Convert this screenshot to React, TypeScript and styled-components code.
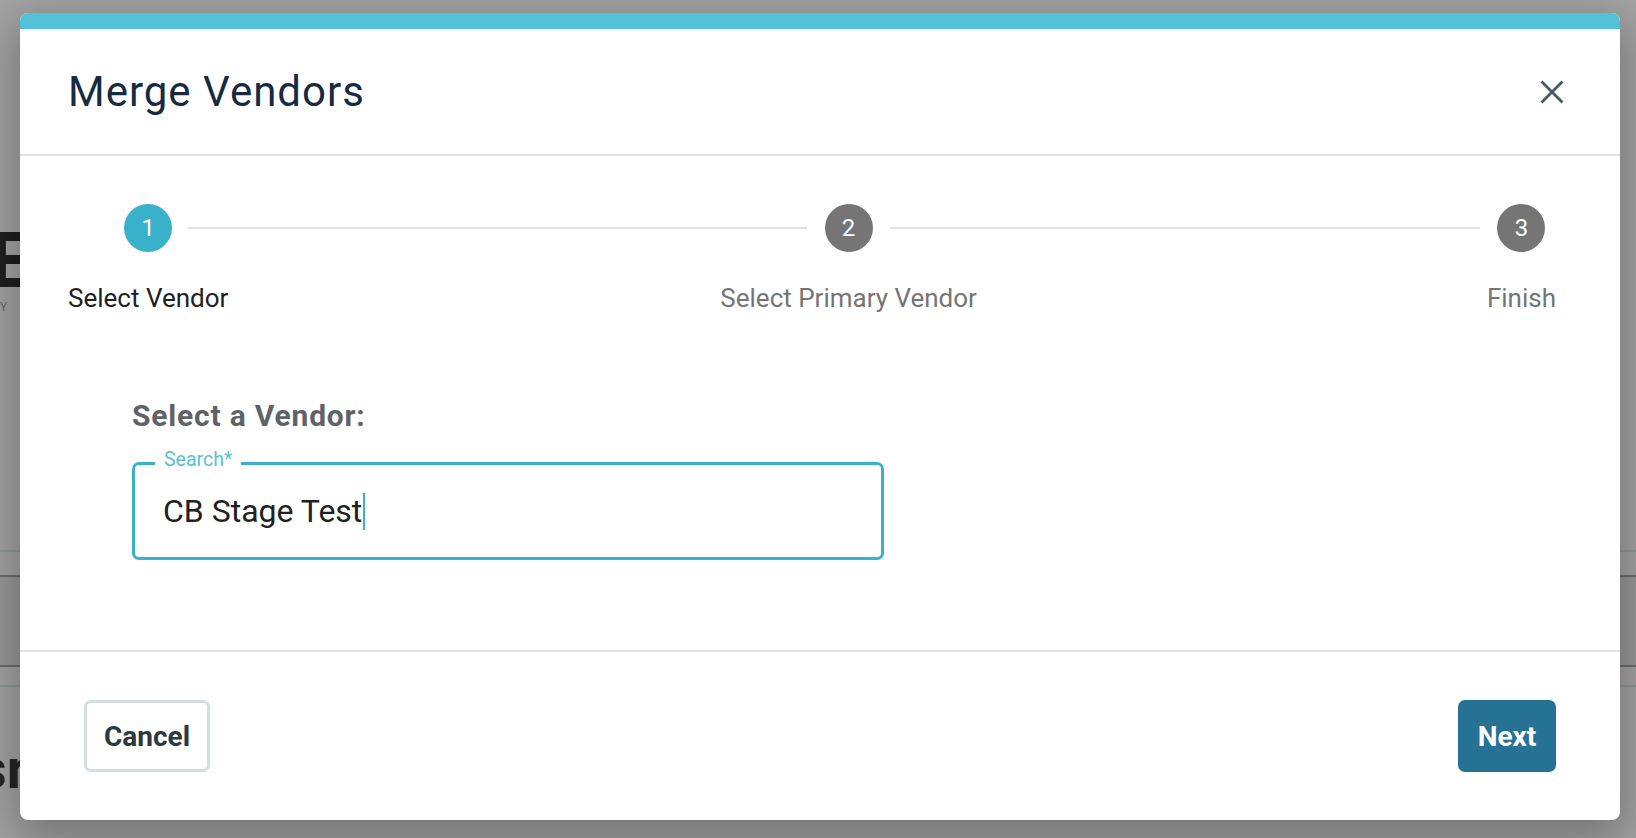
import React from "react";
import styled, { createGlobalStyle } from "styled-components";

const GlobalStyle = createGlobalStyle`
  * { box-sizing: border-box; }
  html, body { margin: 0; padding: 0; }
  body {
    background: #a4a4a4;
    font-family: Roboto, "Noto Sans", "Liberation Sans", sans-serif;
    -webkit-font-smoothing: antialiased;
  }
`;

const Page = styled.div`
  position: relative;
  width: 1636px;
  height: 838px;
  overflow: hidden;
  background: #a4a4a4;
`;

/* ---------- backdrop page (mostly hidden behind the dialog) ---------- */
const Backdrop = styled.div`
  display: flex;
  flex-direction: column;
  height: 100%;
`;

const Logo = styled.div`
  margin-top: 220px;
  margin-left: -11px;
  height: 80px;
  font-family: "Liberation Sans", Arial, sans-serif;
  font-size: 80px;
  line-height: 80px;
  font-weight: 700;
  color: #1f1f1f;
`;

const Tagline = styled.div`
  margin-top: 0;
  margin-left: 0;
  font-size: 12px;
  letter-spacing: 10px;
  color: #6a6a6a;
  white-space: nowrap;
`;

const TableBlock = styled.div`
  margin-top: 236px;
  display: flex;
  flex-direction: column;
`;

const TableLine = styled.div<{ $h: number; $dark?: boolean; $fill?: string }>`
  height: ${(p) => p.$h}px;
  border-bottom: 2px solid ${(p) => (p.$dark ? "#6d6d6d" : "#8f9898")};
  background: ${(p) => p.$fill || "transparent"};
`;

const BackHeading = styled.div`
  margin-top: 54px;
  margin-left: -22px;
  font-size: 56px;
  font-weight: 700;
  color: #262626;
  line-height: 56px;
  white-space: nowrap;
`;

/* ---------- dialog ---------- */
const Dialog = styled.div`
  position: absolute;
  left: 20px;
  top: 13px;
  width: 1600px;
  height: 807px;
  background: #ffffff;
  border-radius: 8px;
  overflow: hidden;
  display: flex;
  flex-direction: column;
  box-shadow: 0 14px 46px 6px rgba(0, 0, 0, 0.3);
`;

const TopBar = styled.div`
  height: 16px;
  flex: none;
  background: #53c1d8;
`;

const Header = styled.div`
  height: 127px;
  flex: none;
  display: flex;
  align-items: center;
  justify-content: space-between;
  padding: 0 56px 0 48px;
  border-bottom: 2px solid #e2e2e2;
`;

const Title = styled.h1`
  margin: 0;
  font-size: 42px;
  font-weight: 400;
  letter-spacing: 1px;
  color: #172b40;
  line-height: 50px;
`;

const CloseButton = styled.button`
  width: 24px;
  height: 24px;
  padding: 0;
  border: 0;
  background: transparent;
  display: flex;
  align-items: center;
  justify-content: center;
  cursor: pointer;
  color: #465a5e;
`;

const Body = styled.div`
  flex: none;
  height: 494px;
  padding: 48px 64px 0 48px;
  display: flex;
  flex-direction: column;
`;

const Stepper = styled.div`
  display: flex;
  align-items: flex-start;
`;

const Step = styled.div<{ $padLeft?: number }>`
  display: flex;
  flex-direction: column;
  align-items: center;
  flex: none;
  padding-left: ${(p) => p.$padLeft || 0}px;
`;

const Circle = styled.div<{ $active?: boolean }>`
  width: 48px;
  height: 48px;
  border-radius: 50%;
  background: ${(p) => (p.$active ? "#3ab1cb" : "#757575")};
  color: #ffffff;
  font-size: 24px;
  line-height: 48px;
  text-align: center;
`;

const StepLabel = styled.div<{ $active?: boolean }>`
  margin-top: 31px;
  font-size: 26px;
  line-height: 30px;
  color: ${(p) => (p.$active ? "#212121" : "#757575")};
  white-space: nowrap;
`;

const Connector = styled.div<{ $extL: number; $extR: number }>`
  position: relative;
  flex: 1;
  height: 2px;
  margin-top: 23px;
  &::before {
    content: "";
    position: absolute;
    top: 0;
    height: 2px;
    left: -${(p) => p.$extL}px;
    right: -${(p) => p.$extR}px;
    background: #e0e0e0;
  }
`;

const Form = styled.div`
  margin-top: 85px;
  padding-left: 64px;
  display: flex;
  flex-direction: column;
`;

const FormHeading = styled.h2`
  margin: 0;
  font-size: 30px;
  line-height: 35px;
  font-weight: 700;
  letter-spacing: 0.8px;
  color: #5f6368;
`;

const Field = styled.div`
  position: relative;
  margin-top: 29px;
  width: 752px;
  height: 98px;
  border: 3px solid #3ab1cb;
  border-radius: 7px;
  display: flex;
  align-items: center;
  padding-left: 28px;
`;

const FieldLabel = styled.span`
  position: absolute;
  top: -15px;
  left: 20px;
  padding: 0 9px;
  background: #ffffff;
  font-size: 19.5px;
  line-height: 20px;
  color: #5bc0d7;
`;

const FieldValue = styled.div`
  font-size: 32px;
  line-height: 40px;
  color: #212121;
  display: flex;
  align-items: center;
`;

const Caret = styled.span`
  display: inline-block;
  width: 2px;
  height: 37px;
  margin-left: 1px;
  background: #3ab1cb;
`;

const Footer = styled.div`
  flex: 1;
  border-top: 2px solid #e2e2e2;
  display: flex;
  align-items: center;
  justify-content: space-between;
  padding: 0 64px;
`;

const Button = styled.button<{ $primary?: boolean }>`
  height: 72px;
  padding: 0 ${(p) => (p.$primary ? "19px" : "16px")};
  border-radius: 7px;
  font-family: Roboto, "Noto Sans", "Liberation Sans", sans-serif;
  font-size: 28px;
  font-weight: 700;
  cursor: pointer;
  border: ${(p) => (p.$primary ? "0" : "3px solid #d4dde1")};
  background: ${(p) => (p.$primary ? "#267294" : "#ffffff")};
  color: ${(p) => (p.$primary ? "#ffffff" : "#2c393f")};
  min-width: ${(p) => (p.$primary ? "98px" : "126px")};
`;

const CloseIcon = () => (
  <svg width="24" height="24" viewBox="0 0 24 24" fill="none">
    <path
      d="M1.5 1.5 L22.5 22.5 M22.5 1.5 L1.5 22.5"
      stroke="currentColor"
      strokeWidth="2.8"
      strokeLinecap="butt"
    />
  </svg>
);

export default function App() {
  return (
    <Page>
      <GlobalStyle />
      <Backdrop>
        <Logo>E</Logo>
        <Tagline>Y N</Tagline>
        <TableBlock>
          <TableLine $h={1} />
          <TableLine $h={25} $dark />
          <TableLine $h={90} $dark $fill="#9a9a9a" />
          <TableLine $h={20} />
        </TableBlock>
        <BackHeading>sr</BackHeading>
      </Backdrop>

      <Dialog role="dialog" aria-label="Merge Vendors">
        <TopBar />
        <Header>
          <Title>Merge Vendors</Title>
          <CloseButton aria-label="Close">
            <CloseIcon />
          </CloseButton>
        </Header>
        <Body>
          <Stepper>
            <Step>
              <Circle $active>1</Circle>
              <StepLabel $active>Select Vendor</StepLabel>
            </Step>
            <Connector $extL={40} $extR={87} />
            <Step>
              <Circle>2</Circle>
              <StepLabel>Select Primary Vendor</StepLabel>
            </Step>
            <Connector $extL={87} $extR={11} />
            <Step $padLeft={18}>
              <Circle>3</Circle>
              <StepLabel>Finish</StepLabel>
            </Step>
          </Stepper>
          <Form>
            <FormHeading>Select a Vendor:</FormHeading>
            <Field>
              <FieldLabel>Search*</FieldLabel>
              <FieldValue>
                CB Stage Test
                <Caret />
              </FieldValue>
            </Field>
          </Form>
        </Body>
        <Footer>
          <Button>Cancel</Button>
          <Button $primary>Next</Button>
        </Footer>
      </Dialog>
    </Page>
  );
}
